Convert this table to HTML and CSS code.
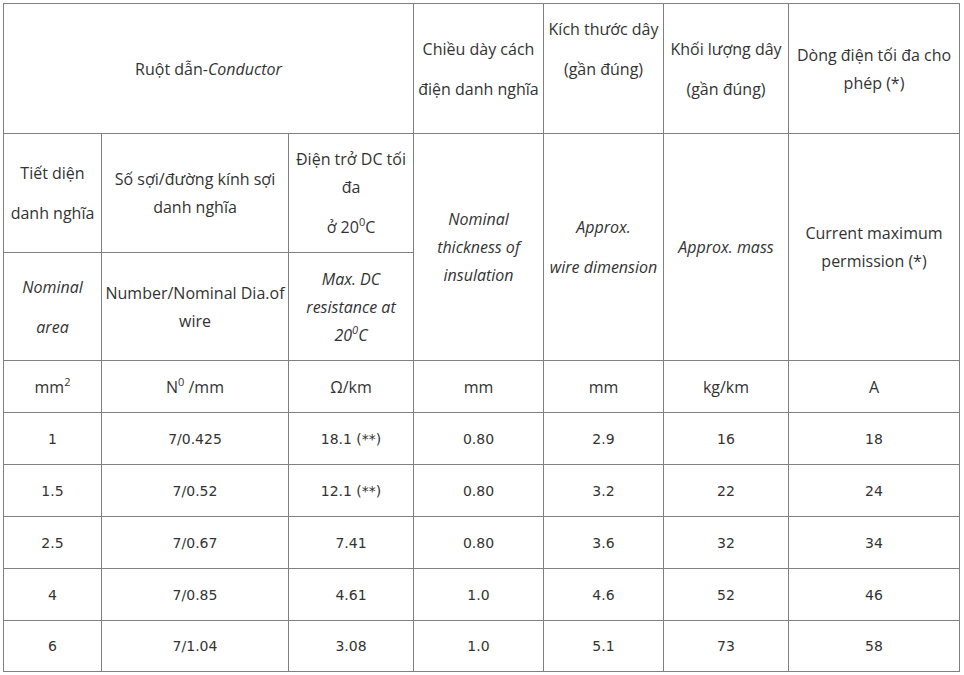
FILE: index.html
```html
<!DOCTYPE html>
<html lang="vi">
<head>
<meta charset="utf-8">
<title>Bảng thông số dây dẫn</title>
<link rel="stylesheet" href="styles.css">
</head>
<body>
<table class="spec">
  <colgroup>
    <col class="c1"><col class="c2"><col class="c3"><col class="c4"><col class="c5"><col class="c6"><col class="c7">
  </colgroup>
  <tbody>
    <tr class="r1">
      <td colspan="3"><p>Ruột dẫn-<em>Conductor</em></p></td>
      <td><p>Chiều dày cách</p><p>điện danh nghĩa</p></td>
      <td><p>Kích thước dây</p><p>(gần đúng)</p><p>&nbsp;</p></td>
      <td><p>Khối lượng dây</p><p>(gần đúng)</p></td>
      <td><p>Dòng điện tối đa cho phép (*)</p></td>
    </tr>
    <tr class="r2">
      <td><p>Tiết diện</p><p>danh nghĩa</p></td>
      <td><p>Số sợi/đường kính sợi danh nghĩa</p></td>
      <td><p>Điện trở DC tối đa</p><p>ở 20<sup>0</sup>C</p></td>
      <td rowspan="2"><p><em>Nominal thickness of insulation</em></p></td>
      <td rowspan="2"><p><em>Approx.</em></p><p><em>wire dimension</em></p></td>
      <td rowspan="2"><p><em>Approx. mass</em></p></td>
      <td rowspan="2"><p>Current maximum permission (*)</p></td>
    </tr>
    <tr class="r3">
      <td><p><em>Nominal</em></p><p><em>area</em></p></td>
      <td><p>Number/Nominal Dia.of wire</p></td>
      <td><p><em>Max. DC resistance at 20<sup>0</sup>C</em></p></td>
    </tr>
    <tr class="units">
      <td>mm<sup>2</sup></td>
      <td>N<sup>0</sup> /mm</td>
      <td>Ω/km</td>
      <td>mm</td>
      <td>mm</td>
      <td>kg/km</td>
      <td>A</td>
    </tr>
    <tr class="data"><td>1</td><td>7/0.425</td><td>18.1 (**)</td><td>0.80</td><td>2.9</td><td>16</td><td>18</td></tr>
    <tr class="data"><td>1.5</td><td>7/0.52</td><td>12.1 (**)</td><td>0.80</td><td>3.2</td><td>22</td><td>24</td></tr>
    <tr class="data"><td>2.5</td><td>7/0.67</td><td>7.41</td><td>0.80</td><td>3.6</td><td>32</td><td>34</td></tr>
    <tr class="data"><td>4</td><td>7/0.85</td><td>4.61</td><td>1.0</td><td>4.6</td><td>52</td><td>46</td></tr>
    <tr class="data last"><td>6</td><td>7/1.04</td><td>3.08</td><td>1.0</td><td>5.1</td><td>73</td><td>58</td></tr>
  </tbody>
</table>
</body>
</html>
```
FILE: styles.css
```css
html, body {
  margin: 0;
  padding: 0;
  background: #ffffff;
}
body {
  padding: 3px 0 0 3px;
  font-family: "Open Sans", "Noto Sans", sans-serif;
  font-size: 16px;
  color: #333333;
}
.spec {
  border-collapse: collapse;
  table-layout: fixed;
  width: 957px;
}
.c1 { width: 98px; }
.c2 { width: 187px; }
.c3 { width: 125px; }
.c4 { width: 130px; }
.c5 { width: 120px; }
.c6 { width: 125px; }
.c7 { width: 171px; }
.spec td {
  border: 1px solid #808080;
  padding: 0 1px;
  text-align: center;
  vertical-align: middle;
}
.spec p {
  margin: 0;
  line-height: 28px;
}
.spec p + p {
  margin-top: 12px;
}
.spec sup {
  font-size: 11px;
  line-height: 0;
  vertical-align: 7px;
}
.r1 { height: 130px; }
.r2 { height: 119px; }
.r3 { height: 108px; }
.units { height: 52px; }
.data { height: 52px; }
.data.last { height: 51px; }
.data td {
  font-family: "DejaVu Sans", Verdana, sans-serif;
  font-size: 14px;
}
```
